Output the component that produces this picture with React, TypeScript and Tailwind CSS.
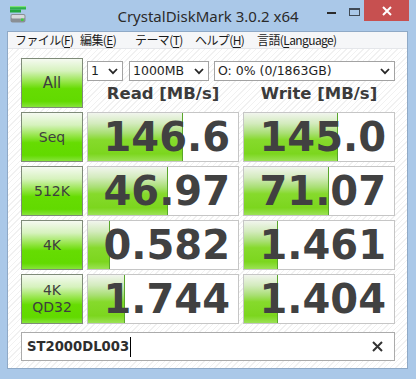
import React from "react";

const rows = [
  { label: ["Seq"], read: "146.6", readFill: 95, write: "145.0", writeFill: 94 },
  { label: ["512K"], read: "46.97", readFill: 80, write: "71.07", writeFill: 85 },
  { label: ["4K"], read: "0.582", readFill: 22, write: "1.461", writeFill: 34 },
  { label: ["4K", "QD32"], read: "1.744", readFill: 37, write: "1.404", writeFill: 34 },
];

const menu = [
  { pre: "ファイル(", key: "F", post: ")", w: "w-[65px]" },
  { pre: "編集(", key: "E", post: ")", w: "w-[55px]" },
  { pre: "テーマ(", key: "T", post: ")", w: "w-[60px]" },
  { pre: "ヘルプ(", key: "H", post: ")", w: "w-[62px]" },
  { pre: "言語(", key: "L", post: "anguage)", w: "" },
];

const btnClass =
  "flex flex-col items-center justify-center border border-[#7f8b79] bg-[linear-gradient(to_bottom,#f5faf1_0%,#d6f2bd_25%,#93e545_48%,#66dc02_62%,#62da00_88%,#86e43a_100%)] text-[14px] leading-[17px] text-[#3e3e3e] [font-family:'DejaVu_Sans',sans-serif]";

function Chevron() {
  return (
    <svg width="10" height="7" viewBox="0 0 10 7" className="shrink-0">
      <path d="M1 1 L5 5.2 L9 1" fill="none" stroke="#262626" strokeWidth="1.8" />
    </svg>
  );
}

function Select({ value, w }: { value: string; w: string }) {
  return (
    <div className={`${w} h-[20px] flex items-center justify-between border border-[#a3a3a3] bg-white pl-[3px] pr-[4px] text-[12.5px] text-[#1e1e1e] [font-family:'DejaVu_Sans',sans-serif]`}>
      <span>{value}</span>
      <Chevron />
    </div>
  );
}

function Result({ value, fill }: { value: string; fill: number }) {
  return (
    <div className="relative border border-[#c6c6c6] bg-white overflow-hidden">
      <div
        className="absolute left-0 top-0 bottom-0 border-r border-r-[#58a62a] bg-[linear-gradient(to_bottom,#f1f5ed_0%,#d3ebbd_22%,#a9df74_42%,#86da2c_56%,#7cd61e_85%,#9be255_100%)]"
        style={{ width: fill }}
      />
      <div className="relative h-full flex items-center justify-end pr-[8px] text-[40px] leading-none font-bold text-[#414141] [font-family:'DejaVu_Sans',sans-serif]">
        {value}
      </div>
    </div>
  );
}

export default function App() {
  return (
    <div className="w-[416px] h-[379px] bg-[#aac8e8] flex flex-col overflow-hidden">
      {/* title bar */}
      <div className="h-[31px] shrink-0 grid grid-cols-[1fr_auto_1fr] items-start">
        <div className="pl-[10px] pt-[6px]">
          <svg width="16" height="17" viewBox="0 0 16 17">
            <rect x="0" y="0" width="16" height="3.5" fill="#2cb24a" />
            <rect x="0" y="0" width="16" height="1.2" fill="#7fe07a" />
            <rect x="0" y="3.5" width="11" height="3" fill="#22a83f" />
            <rect x="0.5" y="8" width="15" height="8.5" rx="2" fill="#8a8f94" />
            <rect x="1.5" y="9" width="13" height="3.5" rx="1" fill="#d6d9dc" />
            <rect x="11" y="12.5" width="2.5" height="2.5" fill="#3ccf3c" />
          </svg>
        </div>
        <div className="pt-[6px] text-[15px] leading-[20px] text-[#2a2a2a] [font-family:'Noto_Sans',sans-serif]">
          CrystalDiskMark 3.0.2 x64
        </div>
        <div className="flex justify-end items-start pr-[7px]">
          <div className="w-[26px] h-[20px] flex items-center justify-center">
            <div className="w-[9px] h-[2px] bg-[#2b2b2b] mt-[6px]" />
          </div>
          <div className="w-[20px] h-[20px] flex items-start justify-center pt-[8px]">
            <div className="w-[11px] h-[8px] border border-[#404a55] border-t-2" />
          </div>
          <div className="w-[45px] h-[21px] bg-[#c75050] flex items-center justify-center">
            <svg width="10" height="10" viewBox="0 0 10 10">
              <path d="M1 1 L9 9 M9 1 L1 9" stroke="#ffffff" strokeWidth="2" />
            </svg>
          </div>
        </div>
      </div>

      {/* client frame */}
      <div className="flex-1 ml-[7px] mr-[8px] mb-[10px] border border-[#8fa9c6] flex flex-col">
        <div className="h-[17px] shrink-0 flex items-center pl-[7px] bg-[#f5f6f8] border-b border-b-[#e4e6ea] text-[12px] leading-none text-[#1b1b1b] tracking-[-0.6px] [font-family:'Noto_Sans_CJK_JP','Noto_Sans',sans-serif]">
          {menu.map((m) => (
            <span key={m.key} className={`${m.w} whitespace-nowrap`}>
              {m.pre}
              <span className="underline underline-offset-2">{m.key}</span>
              {m.post}
            </span>
          ))}
        </div>

        <div className="flex-1 pl-[13px] pr-[12px] pt-[9px] bg-[repeating-linear-gradient(135deg,#ffffff_0px,#ffffff_3px,#f1f1f1_3px,#f1f1f1_4px)]">
          <div className="grid grid-cols-[62px_152px_152px] auto-rows-[50px] gap-[4px]">
            <div className={btnClass}>
              <span className="text-[15px]">All</span>
            </div>
            <div className="col-span-2 flex flex-col">
              <div className="flex gap-[5px] mt-[3px]">
                <Select value="1" w="w-[36px]" />
                <div className="ml-[1px]">
                  <Select value="1000MB" w="w-[80px]" />
                </div>
                <Select value="O: 0% (0/1863GB)" w="w-[181px]" />
              </div>
              <div className="flex-1 grid grid-cols-2 gap-[4px] items-center text-[16.5px] font-bold text-[#3b3b3b] [font-family:'DejaVu_Sans',sans-serif]">
                <div className="text-center">Read [MB/s]</div>
                <div className="text-center">Write [MB/s]</div>
              </div>
            </div>

            {rows.map((r) => (
              <React.Fragment key={r.read}>
                <div className={btnClass}>
                  {r.label.map((l) => (
                    <span key={l}>{l}</span>
                  ))}
                </div>
                <Result value={r.read} fill={r.readFill} />
                <Result value={r.write} fill={r.writeFill} />
              </React.Fragment>
            ))}
          </div>

          <div className="mt-[8px] w-[374px] h-[29px] border border-[#ababab] bg-white flex items-center pl-[5px] pr-[11px]">
            <span className="text-[13.2px] font-bold text-[#2e2e2e] [font-family:'DejaVu_Sans',sans-serif]">
              ST2000DL003
            </span>
            <span className="w-[1px] h-[20px] bg-black ml-[1px]" />
            <span className="flex-1" />
            <svg width="11" height="11" viewBox="0 0 11 11">
              <path d="M1 1 L10 10 M10 1 L1 10" stroke="#333333" strokeWidth="2" />
            </svg>
          </div>
        </div>
      </div>
    </div>
  );
}
